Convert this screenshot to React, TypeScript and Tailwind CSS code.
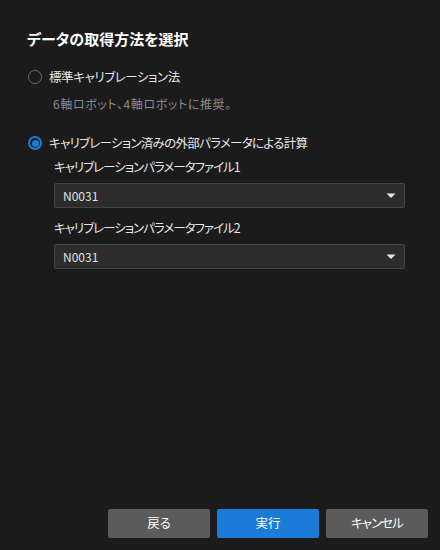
const FONT = "font-['Segoe_UI','Noto_Sans_CJK_JP',sans-serif] [font-feature-settings:'palt']"

function Radio({ checked, label, tracking }: { checked: boolean; label: string; tracking: string }) {
  return (
    <div className="flex items-center h-[20px]">
      {checked ? (
        <span className="ml-[1px] w-[14px] h-[14px] rounded-full border-[2px] border-[#1c7cd8] flex items-center justify-center">
          <span className="w-[7px] h-[7px] rounded-full bg-[#1c7cd8]" />
        </span>
      ) : (
        <span className="ml-[1px] w-[14px] h-[14px] rounded-full border border-[#6a6a6a]" />
      )}
      <span className={`ml-[7px] text-[12.5px] text-[#e6e6e6] ${tracking}`}>{label}</span>
    </div>
  )
}

function Select({ value }: { value: string }) {
  return (
    <div className="h-[25px] w-[351px] rounded-[2px] border border-[#444] bg-[#2c2c2c] flex items-center justify-between pl-[8px] pr-[8px]">
      <span className="text-[12px] text-[#e0e0e0]">{value}</span>
      <svg width="10" height="6" viewBox="0 0 10 6">
        <path d="M0.5 0.5 H9.5 L5 5 Z" fill="#e8e8e8" />
      </svg>
    </div>
  )
}

export default function App() {
  return (
    <div className={`w-[440px] h-[550px] bg-[#1b1b1b] flex flex-col ${FONT}`}>
      <div className="flex-1 pl-[27px] pt-[28px]">
        <h1 className="text-[15px] leading-[22px] font-bold text-white">データの取得方法を選択</h1>

        <div className="mt-[17px]">
          <Radio checked={false} label="標準キャリブレーション法" tracking="tracking-[-0.4px]" />
        </div>
        <p className="mt-[7px] ml-[26px] text-[12px] leading-[20px] text-[#8a8a8a] tracking-[0.6px]">6軸ロボット、4軸ロボットに推奨。</p>

        <div className="mt-[19px]">
          <Radio checked={true} label="キャリブレーション済みの外部パラメータによる計算" tracking="tracking-[-0.7px]" />
        </div>

        <div className="ml-[27px]">
          <p className="mt-[4px] text-[12.5px] leading-[20px] text-[#e6e6e6] tracking-[-1px]">キャリブレーションパラメータファイル1</p>
          <div className="mt-[6px]">
            <Select value="N0031" />
          </div>
          <p className="mt-[10px] text-[12.5px] leading-[20px] text-[#e6e6e6] tracking-[-1px]">キャリブレーションパラメータファイル2</p>
          <div className="mt-[6px]">
            <Select value="N0031" />
          </div>
        </div>
      </div>

      <div className="flex justify-end gap-[7px] pr-[12px] pb-[12px] text-[12.5px] text-white">
        <button className="w-[102px] h-[29px] rounded-[2px] bg-[#5b5b5b]">戻る</button>
        <button className="w-[102px] h-[29px] rounded-[2px] bg-[#1b7bd9]">実行</button>
        <button className="w-[102px] h-[29px] rounded-[2px] bg-[#5b5b5b] tracking-[-1px]">キャンセル</button>
      </div>
    </div>
  )
}
